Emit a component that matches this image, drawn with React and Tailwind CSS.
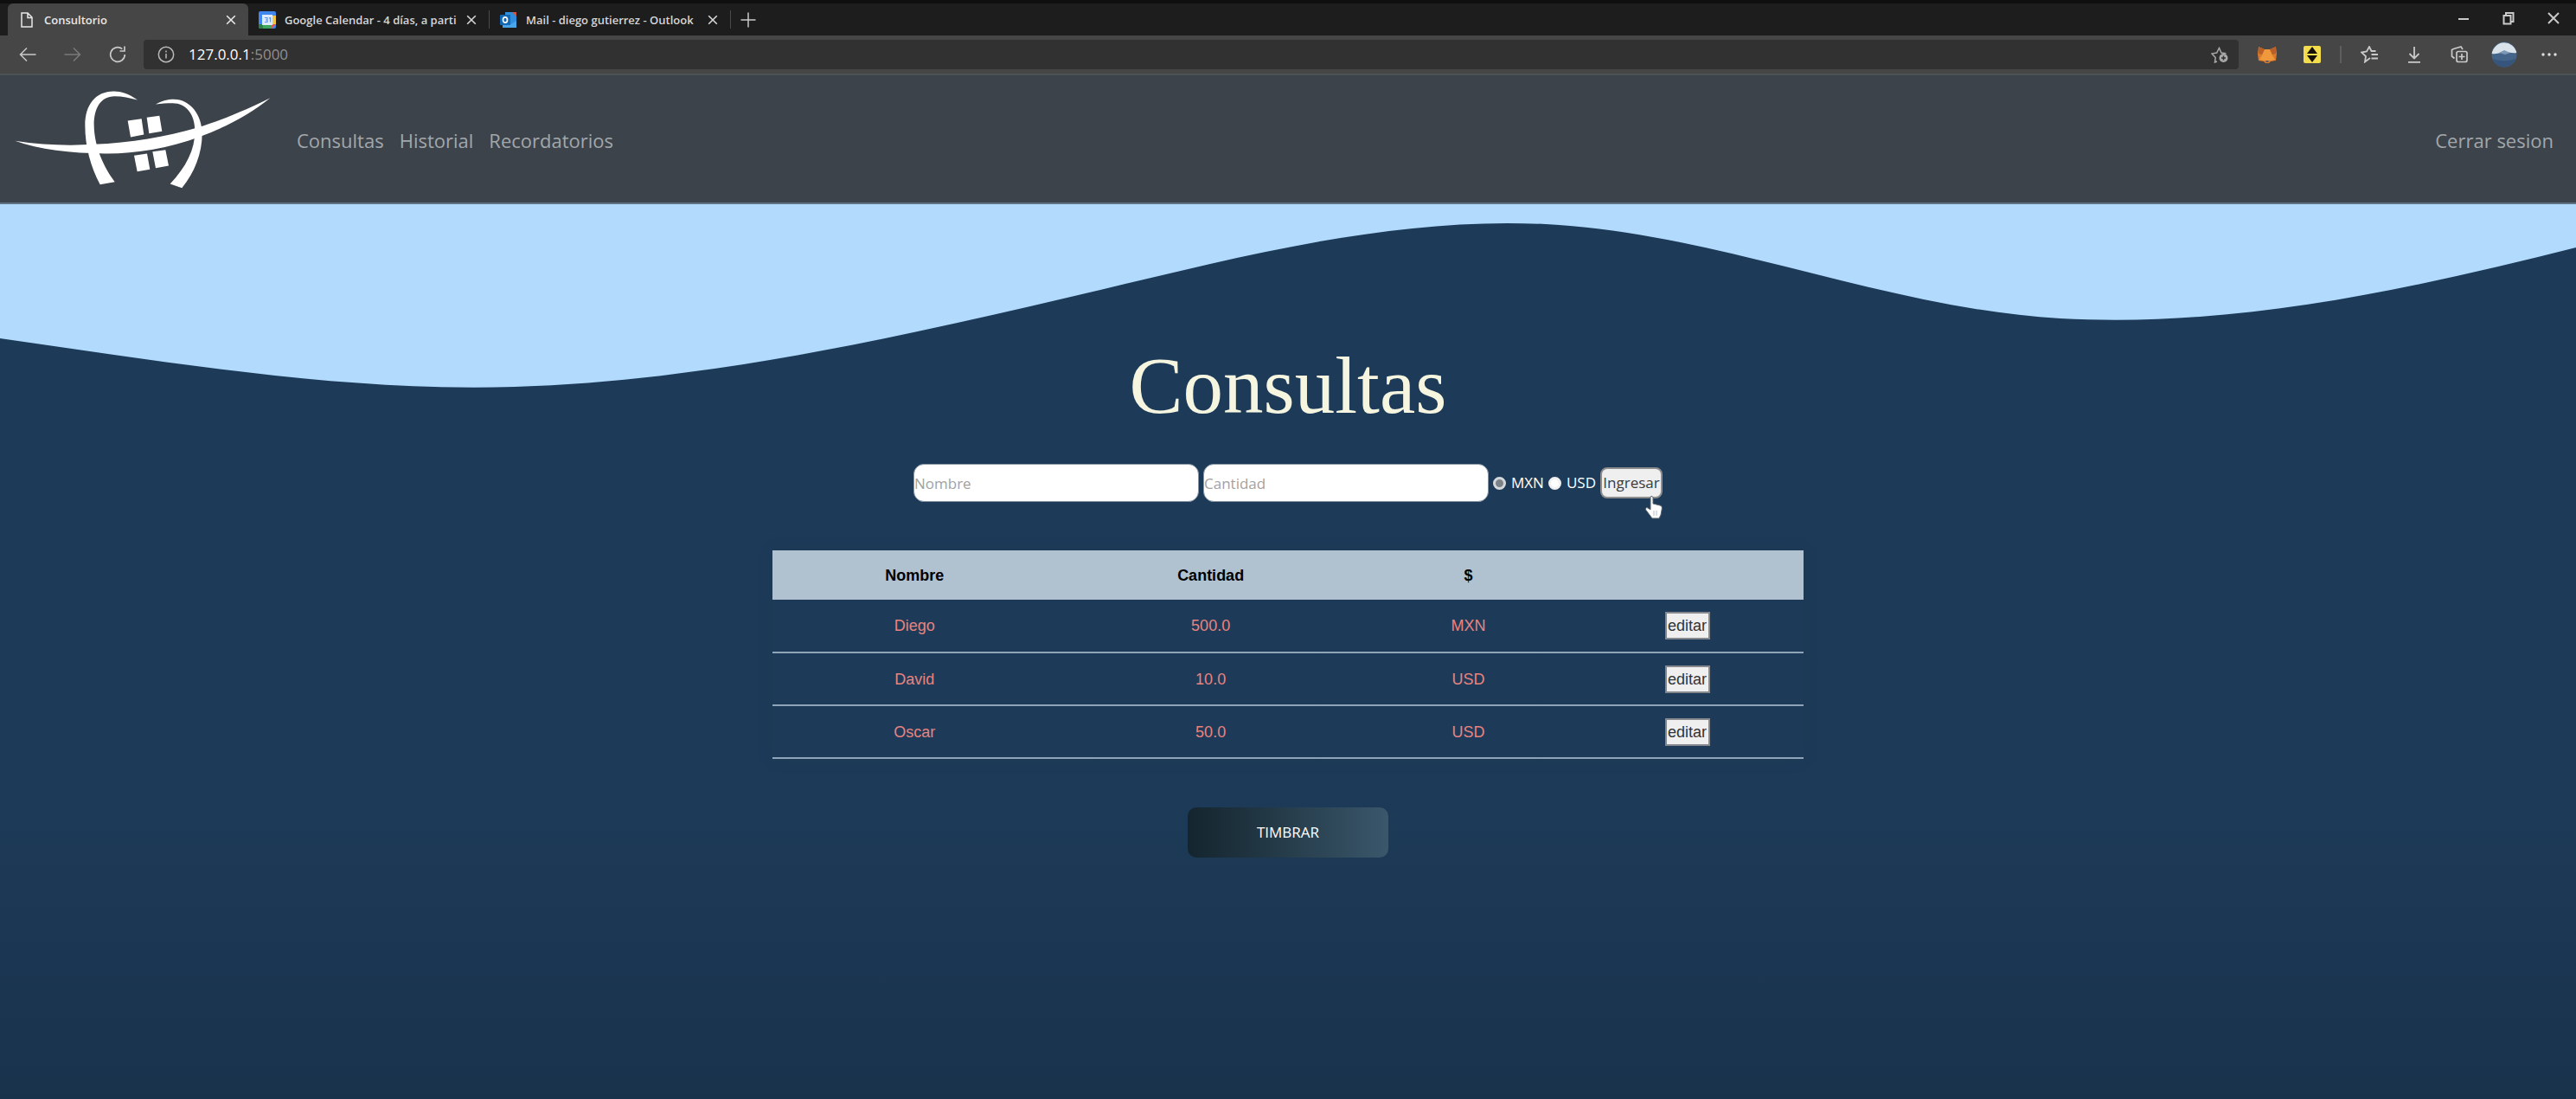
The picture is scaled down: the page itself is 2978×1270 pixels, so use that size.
const rows = [
  { nombre: "Diego", cantidad: "500.0", moneda: "MXN" },
  { nombre: "David", cantidad: "10.0", moneda: "USD" },
  { nombre: "Oscar", cantidad: "50.0", moneda: "USD" },
];

function Icon({ className = "size-5", children }) {
  return (
    <svg
      viewBox="0 0 20 20"
      className={className}
      fill="none"
      stroke="currentColor"
      strokeWidth="1.5"
      aria-hidden="true"
    >
      {children}
    </svg>
  );
}

const FileIcon = () => (
  <Icon>
    <path d="M4 2h7l5 5v11H4zM11 2v5.500h5" />
  </Icon>
);

const CalendarIcon = () => (
  <svg viewBox="0 0 20 20" className="size-5" aria-hidden="true">
    <rect x="0" y="0" width="20" height="20" rx="2" fill="#3f86ee" />
    <path d="M15 5h5v10h-5z" fill="#f4c542" />
    <path d="M5 15h10v5H5z" fill="#3fa660" />
    <path d="M0 15h5v5H2a2 2 0 0 1-2-2z" fill="#2f7f4c" />
    <path d="M15 15h5l-5 5z" fill="#e2574c" />
    <rect x="4" y="4" width="12" height="12" fill="#dfeafd" />
    <path d="M7 7.500h3v5H7M8 10h2M12 8l1.500-.5v5" stroke="#5b93ea" strokeWidth="1.200" fill="none" />
  </svg>
);

const OutlookIcon = () => (
  <svg viewBox="0 0 20 20" className="size-5" aria-hidden="true">
    <path d="M6 1h9l4 4v14H6z" fill="#2f8fdd" />
    <path d="M3 13l8 3 8-5v8H3z" fill="#4aa6ea" />
    <rect x="0" y="4" width="12" height="12" rx="1" fill="#1467b3" />
    <ellipse cx="6" cy="10" rx="2.500" ry="3.200" fill="none" stroke="#fff" strokeWidth="1.700" />
    <path d="M14 1h5v5z" fill="#d2553f" />
  </svg>
);

const CloseIcon = () => (
  <Icon className="size-4">
    <path d="M4 4l12 12M16 4L4 16" strokeWidth="2" />
  </Icon>
);

function Tab({ icon, title, active }) {
  return (
    <div
      className={
        active
          ? "flex w-[278px] items-center rounded-t-md bg-[#464646] pr-3 pl-3 text-[#e8e8e8]"
          : "flex w-[278px] items-center pr-3 pl-3 text-[#d6d6d6]"
      }
    >
      <span className="shrink-0">{icon}</span>
      <button
        type="button"
        className="ml-2.5 min-w-0 flex-1 overflow-hidden text-left text-[13px] leading-5 font-semibold whitespace-nowrap"
      >
        {title}
      </button>
      <button type="button" aria-label="Cerrar pestaña" className="ml-2 shrink-0">
        <CloseIcon />
      </button>
    </div>
  );
}

function ToolButton({ label, className = "text-[#c9c9c9]", children }) {
  return (
    <button type="button" aria-label={label} className={`flex w-[52px] shrink-0 justify-center ${className}`}>
      {children}
    </button>
  );
}

function Browser() {
  return (
    <div className="border-t-4 border-[#0f0f0f] bg-[#1d1d1d]">
      <div className="flex h-[37px] items-stretch pl-[9px]">
        <Tab active icon={<FileIcon />} title="Consultorio" />
        <Tab icon={<CalendarIcon />} title="Google Calendar - 4 días, a parti" />
        <div className="my-2 w-px bg-[#4a4a4a]" />
        <Tab icon={<OutlookIcon />} title="Mail - diego gutierrez - Outlook" />
        <div className="my-2 w-px bg-[#4a4a4a]" />
        <button type="button" aria-label="Nueva pestaña" className="ml-2.5 text-[#c9c9c9]">
          <Icon>
            <path d="M10 1.500v17M1.500 10h17" />
          </Icon>
        </button>
        <div className="ml-auto flex items-center pb-1">
          <ToolButton label="Minimizar">
            <Icon>
              <path d="M4 11h12" strokeWidth="2" />
            </Icon>
          </ToolButton>
          <ToolButton label="Restaurar">
            <Icon>
              <path d="M4.500 7h8v9.500h-8zM7 6.500V4h8.500v10H13" strokeWidth="2" />
            </Icon>
          </ToolButton>
          <ToolButton label="Cerrar">
            <Icon>
              <path d="M4 4l12 12M16 4L4 16" strokeWidth="2" />
            </Icon>
          </ToolButton>
        </div>
      </div>

      <div className="flex h-[46px] items-center border-b-2 border-[#4d5255] bg-[#464646] pr-[5px] pl-1.5">
        <ToolButton label="Atrás">
          <Icon>
            <path d="M19.500 10H1.500M9 2.500L1.500 10 9 17.500" />
          </Icon>
        </ToolButton>
        <ToolButton label="Adelante" className="text-[#7a7a7a]">
          <Icon>
            <path d="M.5 10h18M11 2.500l7.500 7.500-7.500 7.500" />
          </Icon>
        </ToolButton>
        <ToolButton label="Actualizar">
          <Icon>
            <path d="M18.300 10a8.300 8.300 0 1 1-3-6.400M18 .5v5.500h-5.500" strokeWidth="1.700" />
          </Icon>
        </ToolButton>
        <div className="ml-1 flex h-[34px] flex-1 items-center rounded bg-[#313131] pr-3 pl-4 text-[#b9b9b9]">
          <Icon>
            <circle cx="10" cy="10" r="8.700" />
            <path d="M10 9v5.500M10 5.500v2" />
          </Icon>
          <p className="ml-4 flex-1 text-[17px] leading-6 text-[#909090]">
            <span className="text-white">127.0.0.1</span>:5000
          </p>
          <button type="button" aria-label="Agregar a favoritos" className="text-[#a9a9a9]">
            <Icon>
              <path d="M7 18l-2.500 1 .7-5.500L1 9l5.700-1L9.500 2.500 12 8l5.500.8" />
              <circle cx="14.500" cy="14" r="5" fill="currentColor" stroke="none" />
              <path d="M14.500 11.500v5M12 14h5" stroke="#313131" />
            </Icon>
          </button>
        </div>
        <div className="w-[7px]" />
        <ToolButton label="MetaMask">
          <svg viewBox="0 0 22 20" className="h-5 w-[22px]" aria-hidden="true">
            <path d="M1 1l7 3h6l7-3 1 8-1 8-6 1-2 2H9l-2-2-6-1L0 9z" fill="#d97a2c" />
            <path d="M8 4h6l3 7 3 5-5 1H7l-5-1 3-5z" fill="#f0993c" />
            <path d="M1 1l7 3-3 6-4-1zM21 1l-7 3 3 6 4-1z" fill="#b9602a" />
            <path d="M9 17h4l-1 2h-2z" fill="#5b5c66" />
          </svg>
        </ToolButton>
        <ToolButton label="Extensión">
          <svg viewBox="0 0 22 22" className="size-[22px]" aria-hidden="true">
            <rect x="1" y="1" width="20" height="20" rx="2" fill="#f3dd4c" />
            <path d="M11 2l6 8H5zM11 20l6-8H5z" fill="#141208" />
          </svg>
        </ToolButton>
        <div className="mx-1.5 h-5 w-0.5 bg-[#5e5e5e]" />
        <ToolButton label="Favoritos">
          <Icon>
            <path d="M11 14l-6 4.500 1-6.500-5-4.500 6-1L10 1l2.500 5h5" strokeWidth="1.800" />
            <path d="M12.500 10H20M12.500 14.500H20" strokeWidth="2" />
          </Icon>
        </ToolButton>
        <ToolButton label="Descargas">
          <Icon>
            <path d="M10 1v13.500M4.500 9l5.500 5.500L15.500 9M3 18.800h14" strokeWidth="1.800" />
          </Icon>
        </ToolButton>
        <ToolButton label="Colecciones">
          <Icon>
            <rect x="7" y="6.500" width="12" height="12" rx="2" strokeWidth="1.700" />
            <path d="M13 9v7M9.500 12.500h7M4.500 14.500L1.500 12V4.500l2-1L12 1l2 3" strokeWidth="1.700" />
          </Icon>
        </ToolButton>
        <ToolButton label="Perfil">
          <svg viewBox="0 0 30 30" className="size-[30px]" aria-hidden="true">
            <circle cx="15" cy="15" r="14.500" fill="#456489" />
            <path d="M.7 14A14.500 14.500 0 0 1 29.300 13C24 14 20 12 16 12S8 15 .7 14z" fill="#dbe3ea" />
            <path d="M9 13l6-3 7 3-6 2z" fill="#7d98b5" />
            <path d="M2 20c8 3 18 3 26 0-2 6-7 9.500-13 9.500S4 26 2 20z" fill="#36557c" />
          </svg>
        </ToolButton>
        <ToolButton label="Configuración" className="text-[#e0e0e0]">
          <Icon>
            <g fill="currentColor" stroke="none">
              <circle cx="3" cy="10" r="1.700" />
              <circle cx="10" cy="10" r="1.700" />
              <circle cx="17" cy="10" r="1.700" />
            </g>
          </Icon>
        </ToolButton>
      </div>
    </div>
  );
}

function Logo() {
  return (
    <svg viewBox="50 40 900 350" className="h-[117px] w-[300px]" fill="#fff" role="img" aria-label="Consultorio">
      <path d="M57 219C150 234 250 236 330 231C460 226 580 205 690 173C790 142 870 105 942 70C870 128 790 170 700 204C590 246 470 264 370 263C250 262 140 250 57 219Z" />
      <path d="M482 77C450 55 425 47 400 47C335 47 300 95 300 165C300 240 320 310 352 370L403 361C365 310 332 240 331 165C330 105 355 64 402 64C430 64 455 70 482 77Z" />
      <path d="M545 92C570 80 585 75 608 75C665 75 706 130 706 195C706 260 680 330 636 382L595 368C650 310 681 250 681 185C681 125 650 88 604 88C582 88 565 89 545 92Z" />
      <path d="M448 149L496 142L504 197L458 206ZM514 138L558 132L567 186L522 193ZM470 270L515 263L525 318L481 325ZM534 256L579 250L590 305L545 313Z" />
    </svg>
  );
}

function Currency({ value, checked }) {
  return (
    <label className="flex items-center gap-1.5 text-[17px] leading-6 text-white">
      <input
        type="radio"
        name="moneda"
        value={value}
        defaultChecked={checked}
        className="size-[15px] appearance-none rounded-full border-3 border-[#f0f0f0] bg-white checked:border-[#d5d8db] checked:bg-[#7c8288]"
      />
      {value}
    </label>
  );
}

const inputClass =
  "h-11 w-[330px] rounded-xl border border-[#8796a5] bg-white text-[17px] text-[#333] placeholder:text-[#a2a2a2]";

export default function App() {
  return (
    <div className="flex min-h-screen flex-col bg-linear-to-b from-[#1d3b59] from-70% to-[#19324c] font-['Open_Sans','Noto_Sans',sans-serif]">
      <Browser />

      <nav className="flex h-[149px] items-center border-b-2 border-[#5f7385] bg-[#3c434a] pt-0.5 pr-[26px] pl-[15px] text-[22px] leading-8 text-[#a3a7aa]">
        <Logo />
        <div className="ml-7 flex gap-[18px]">
          <a href="#consultas">Consultas</a>
          <a href="#historial">Historial</a>
          <a href="#recordatorios">Recordatorios</a>
        </div>
        <a href="#salir" className="ml-auto">
          Cerrar sesion
        </a>
      </nav>

      <main className="flex flex-col items-center">
        <svg viewBox="0 0 2978 220" preserveAspectRatio="none" className="h-[220px] w-full" aria-hidden="true">
          <path
            fill="#b2dafc"
            d="M0 0V155C199 183 396 217 595 211C794 205 992 164 1191 118C1390 73 1588 13 1787 23C1986 33 2183 121 2382 132C2581 143 2779 100 2978 50V0Z"
          />
        </svg>

        <h1 className="-mt-[57px] font-['Liberation_Serif',serif] text-[93px] leading-[93px] text-[#f5f5e0]">
          Consultas
        </h1>

        <form className="mt-11 flex items-center gap-[5px]" onSubmit={(e) => e.preventDefault()}>
          <input type="text" aria-label="Nombre" placeholder="Nombre" className={inputClass} />
          <input type="text" aria-label="Cantidad" placeholder="Cantidad" className={inputClass} />
          <Currency value="MXN" checked />
          <Currency value="USD" />
          <div className="relative">
            <button
              type="submit"
              className="flex h-9 w-[72px] items-center justify-center rounded-lg border-2 border-[#8d8d8d] bg-[#efefef] text-[17px] text-[#3a3a3a]"
            >
              Ingresar
            </button>
            <svg viewBox="0 0 20 28" className="absolute top-8 right-0 h-7 w-5" aria-hidden="true">
              <path
                d="M6 2c1.500-1 3-.5 3 1v7l8 2c2 .5 2.500 2 2.300 4L18 23l-2 4H8l-3-4-4.500-6c-.5-2 1-3 2.500-2l3 2z"
                fill="#fff"
                stroke="#56606b"
              />
              <path d="M10 18v6M13 18v6" stroke="#b9c0c8" />
            </svg>
          </div>
        </form>

        <table className="mt-14 w-2/5 table-fixed border-collapse text-center font-['Liberation_Sans',sans-serif] text-[18px] leading-6 shadow-[0_0_20px_rgba(0,0,0,0.08)]">
          <colgroup>
            <col className="w-[27.5%]" />
            <col className="w-[30%]" />
            <col className="w-[20%]" />
            <col className="w-[22.5%]" />
          </colgroup>
          <thead>
            <tr className="h-[57px] bg-[#b0c1cf] text-black">
              <th scope="col">Nombre</th>
              <th scope="col">Cantidad</th>
              <th scope="col">$</th>
              <td />
            </tr>
          </thead>
          <tbody>
            {rows.map((row) => (
              <tr key={row.nombre} className="h-[61px] border-b-2 border-[#8fa4b8] text-[#e8837f]">
                <td>{row.nombre}</td>
                <td>{row.cantidad}</td>
                <td>{row.moneda}</td>
                <td>
                  <button
                    type="button"
                    className="h-8 w-[52px] border-2 border-[#85898d] bg-[#efefef] align-middle leading-6 text-[#333]"
                  >
                    editar
                  </button>
                </td>
              </tr>
            ))}
          </tbody>
        </table>

        <button
          type="button"
          className="mt-14 h-[58px] w-[232px] rounded-[10px] bg-linear-to-r from-[#14252e] to-[#3a576b] text-[17px] text-white"
        >
          TIMBRAR
        </button>
      </main>
    </div>
  );
}
